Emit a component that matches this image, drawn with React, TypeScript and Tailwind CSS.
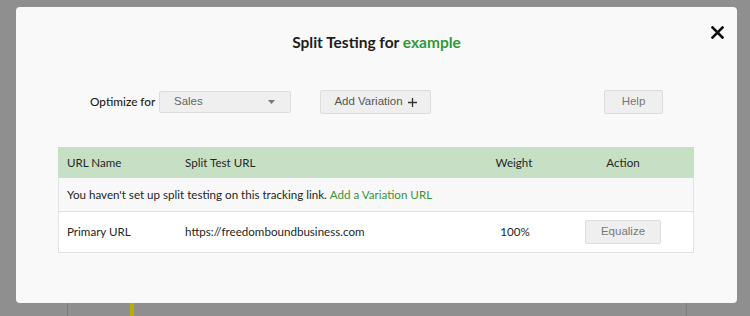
import React from 'react'

const rows = [
  { name: 'Primary URL', url: 'https://freedomboundbusiness.com', weight: '100%' },
]

function CloseIcon() {
  return (
    <svg width="13" height="13" viewBox="0 0 13 13" fill="none">
      <path d="M1.5 1.5 L11.5 11.5 M11.5 1.5 L1.5 11.5" stroke="#111" strokeWidth="2.6" strokeLinecap="square" />
    </svg>
  )
}

export default function App() {
  return (
    <div className="w-[750px] h-[316px] bg-[#8f8f8f] overflow-hidden flex flex-col">
      <div className="h-[7px] shrink-0" />
      <div className="relative ml-[16px] w-[721px] h-[296px] shrink-0 bg-[#f9f9f9] rounded-[4px] flex flex-col">
        <button className="absolute top-[19px] right-[13px] w-[13px] h-[13px] flex items-center justify-center">
          <CloseIcon />
        </button>

        <h2
          className="mt-[25px] h-[20px] text-center text-[15.5px] leading-[20px] font-bold text-[#1d1d1d]"
          style={{ fontFamily: 'Lato, "Noto Sans", sans-serif' }}
        >
          Split Testing for <span className="text-[#2f9a3a]">example</span>
        </h2>

        <div className="mt-[38px] h-[24px] flex items-center" style={{ fontFamily: '"Liberation Sans", Arial, sans-serif' }}>
          <span
            className="ml-[74px] w-[63px] whitespace-nowrap text-[11.8px] font-medium text-[#222]"
            style={{ fontFamily: 'Lato, "Noto Sans", sans-serif' }}
          >
            Optimize for
          </span>
          <div className="ml-[6px] w-[132px] h-[22px] bg-[#efefef] border border-[#dcdcdc] rounded-[2px] flex items-center justify-between pl-[14px] pr-[15px]">
            <span className="text-[11.5px] text-[#666]">Sales</span>
            <svg width="7" height="4" viewBox="0 0 7 4">
              <path d="M0 0 L7 0 L3.5 4 Z" fill="#777" />
            </svg>
          </div>
          <button className="ml-[29px] w-[111px] h-[24px] bg-[#efefef] border border-[#dcdcdc] rounded-[2px] flex items-center justify-center gap-[5px] text-[11.5px] text-[#555]">
            <span>Add Variation</span>
            <svg width="9" height="9" viewBox="0 0 9 9">
              <path d="M4.5 0 V9 M0 4.5 H9" stroke="#333" strokeWidth="1.3" />
            </svg>
          </button>
          <button className="ml-[173px] w-[59px] h-[24px] bg-[#efefef] border border-[#dcdcdc] rounded-[2px] flex items-center justify-center text-[11.5px] text-[#777]">
            Help
          </button>
        </div>

        <div
          className="mt-[33px] ml-[42px] w-[636px] border border-[#e2e2e2] text-[11.6px] text-[#262626]"
          style={{ fontFamily: 'Lato, "Noto Sans", sans-serif' }}
        >
          <div className="grid grid-cols-[118px_290px_96px_1fr] h-[31px] items-center bg-[#c6e0c6] -mx-px -mt-px">
            <div className="pl-[9px]">URL Name</div>
            <div className="pl-[9px]">Split Test URL</div>
            <div className="text-center">Weight</div>
            <div className="text-center pr-[10px]">Action</div>
          </div>
          <div className="h-[34px] flex items-center pl-[8px] bg-[#f8f8f8] border-b border-[#e2e2e2]">
            You haven't set up split testing on this tracking link.&nbsp;
            <span className="text-[#3b923b]">Add a Variation URL</span>
          </div>
          {rows.map(r => (
            <div key={r.name} className="grid grid-cols-[118px_290px_96px_1fr] h-[40px] items-center bg-white">
              <div className="pl-[8px]">{r.name}</div>
              <div className="pl-[8px]">{r.url}</div>
              <div className="text-center">{r.weight}</div>
              <div className="flex justify-center pr-[10px]">
                <button
                  className="w-[76px] h-[24px] bg-[#efefef] border border-[#dcdcdc] rounded-[2px] text-[11.5px] text-[#777]"
                  style={{ fontFamily: '"Liberation Sans", Arial, sans-serif' }}
                >
                  Equalize
                </button>
              </div>
            </div>
          ))}
        </div>
      </div>
      <div className="flex h-[13px] shrink-0">
        <div className="ml-[67px] w-px h-full bg-[#7d7d7d]" />
        <div className="ml-[62px] w-[4px] h-full bg-[#b8b000]" />
        <div className="ml-[552px] w-px h-full bg-[#7d7d7d]" />
      </div>
    </div>
  )
}
